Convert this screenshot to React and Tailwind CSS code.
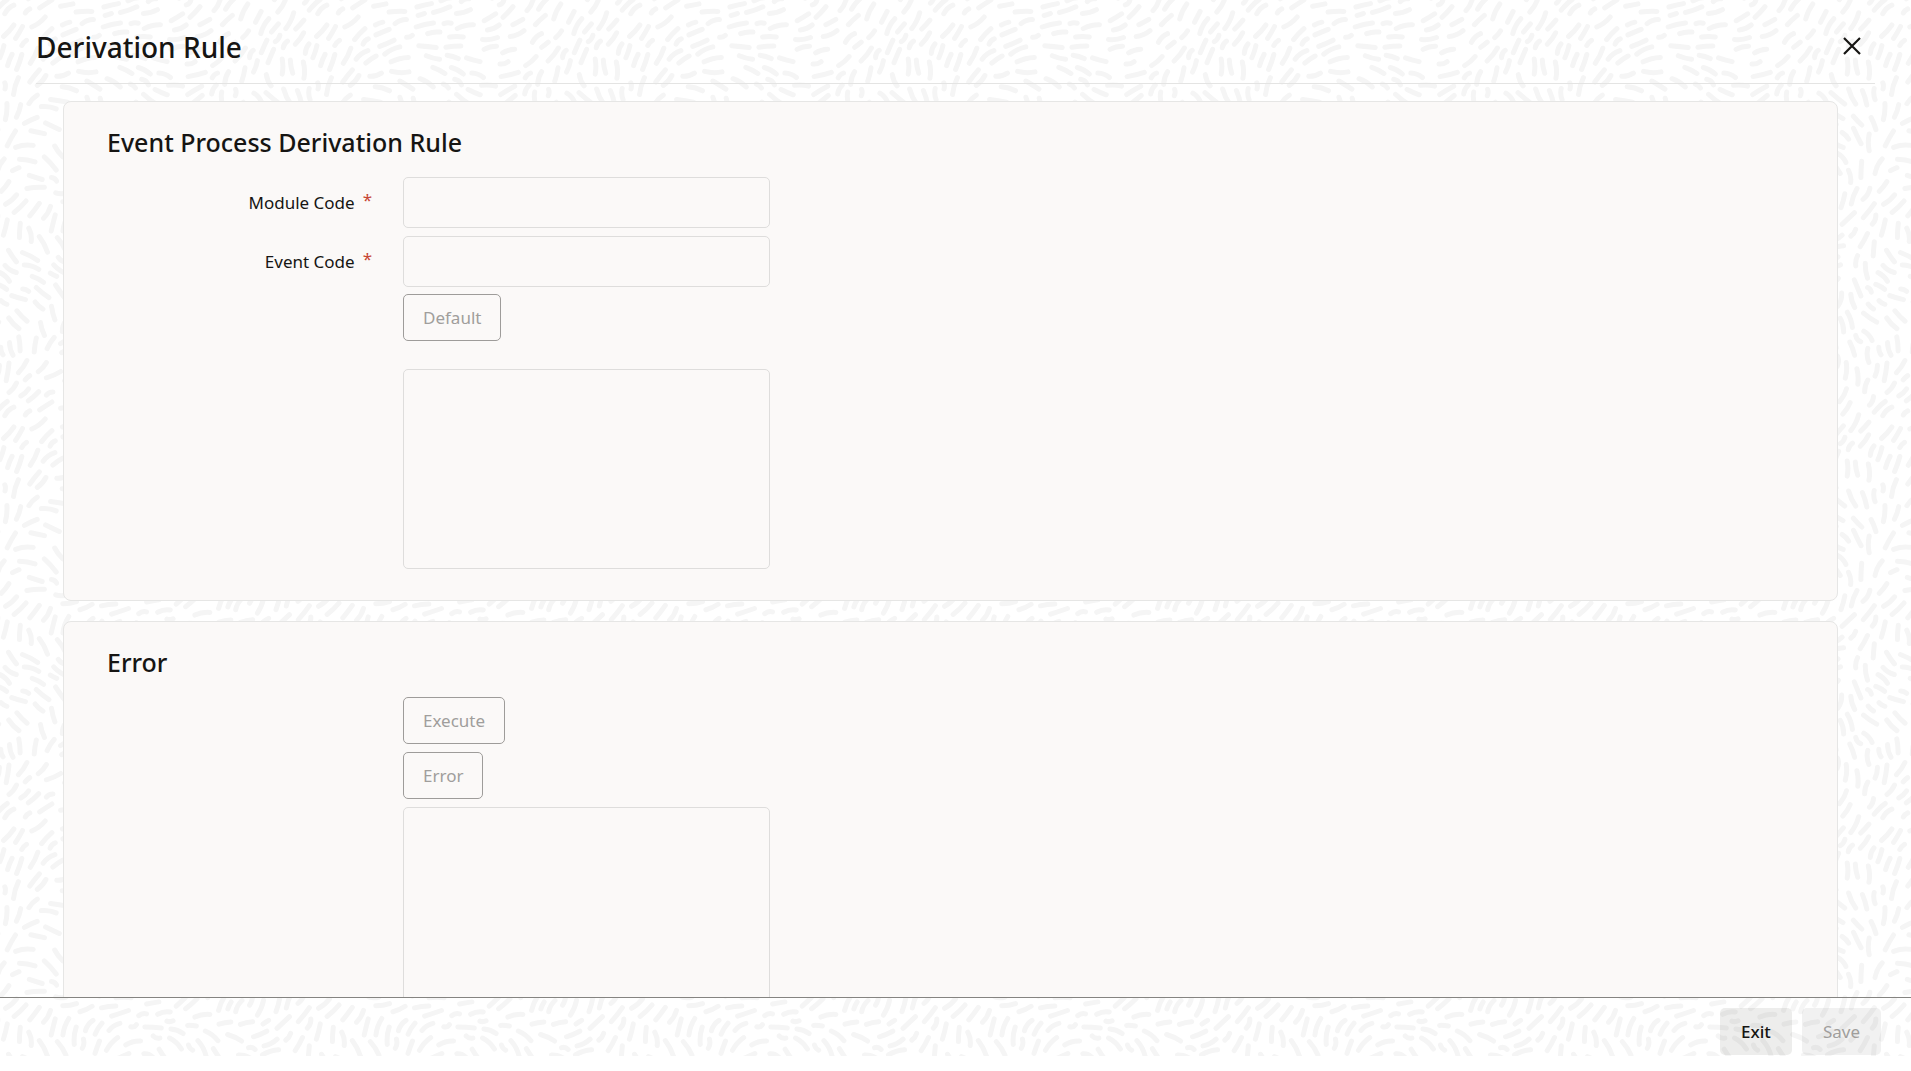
/**
 * Derivation Rule screen
 *
 * - Header with title and close button
 * - Scrollable body with one card per form section
 * - Footer with Exit / Save actions
 */

const TILE_W = 313;
const TILE_H = 402;

// Small seeded generator so the texture is the same on every load
const createRandom = (seed) => () => {
  seed = (seed * 1664525 + 1013904223) % 4294967296;
  return seed / 4294967296;
};

// Shortest distance on a repeating axis
const wrap = (d, size) => d - size * Math.round(d / size);

// Direction of the strokes, periodic in both axes so the tile repeats cleanly
const flowAngle = (x, y) => {
  const u = (x / TILE_W) * Math.PI * 2;
  const v = (y / TILE_H) * Math.PI * 2;
  return -0.6 + 1.3 * Math.sin(u + Math.sin(v) - 1.2) + 0.9 * Math.cos(2 * v + u);
};

const buildStrokes = () => {
  const random = createRandom(29);
  const placed = [];
  const strokes = [];
  for (let i = 0; i < 20000; i++) {
    const x = random() * TILE_W;
    const y = random() * TILE_H;
    const angle = flowAngle(x, y) + (random() - 0.5) * 0.35;
    const half = i < 2500 ? 6 + random() * 3 : 3 + random() * 4;
    const bend = (random() - 0.5) * 5;
    const dx = Math.cos(angle) * half;
    const dy = Math.sin(angle) * half;
    const dots = [-1, -0.5, 0, 0.5, 1].map((t) => [x + dx * t, y + dy * t]);
    const free = dots.every(([ax, ay]) =>
      placed.every(([bx, by]) => Math.hypot(wrap(ax - bx, TILE_W), wrap(ay - by, TILE_H)) > 8)
    );
    if (!free) continue;
    placed.push(...dots);
    const cx = x - Math.sin(angle) * bend;
    const cy = y + Math.cos(angle) * bend;
    // Strokes over an edge are drawn again on the opposite side
    for (const ox of [-TILE_W, 0, TILE_W]) {
      for (const oy of [-TILE_H, 0, TILE_H]) {
        const px = x + ox;
        const py = y + oy;
        if (px < -20 || px > TILE_W + 20 || py < -20 || py > TILE_H + 20) continue;
        strokes.push(
          `M${(px - dx).toFixed(1)} ${(py - dy).toFixed(1)}Q${(cx + ox).toFixed(1)} ${(cy + oy).toFixed(1)} ${(px + dx).toFixed(1)} ${(py + dy).toFixed(1)}`
        );
      }
    }
  }
  return strokes.join('');
};

const STROKES = buildStrokes();

function Texture() {
  return (
    <svg className="absolute inset-0 -z-10 h-full w-full" aria-hidden="true">
      <defs>
        <pattern id="texture" width={TILE_W} height={TILE_H} patternUnits="userSpaceOnUse">
          <path d={STROKES} fill="none" stroke="#f5f5f5" strokeWidth="5" strokeLinecap="round" />
        </pattern>
      </defs>
      <rect width="100%" height="100%" fill="url(#texture)" />
    </svg>
  );
}

function Card({ title, children }) {
  return (
    <section className="rounded-lg border border-[#e6e6e5] bg-[#fbf9f8] px-[43px] pt-[18px] pb-[31px]">
      <h2 className="mb-[13px] text-[25px] leading-[44px] font-medium">{title}</h2>
      {children}
    </section>
  );
}

function Field({ id, label }) {
  return (
    <div className="flex items-center">
      <label htmlFor={id} className="flex w-[296px] items-start justify-end pr-[31px] text-[17px] leading-6">
        {label}
        <span className="ml-2 leading-none text-[#c74634]" aria-hidden="true">
          *
        </span>
      </label>
      <input
        id={id}
        type="text"
        required
        className="h-[51px] w-full max-w-[367px] rounded-[5px] border border-[#dedddc] bg-transparent px-3 text-[17px]"
      />
    </div>
  );
}

function OutlineButton({ children }) {
  return (
    <button
      type="button"
      disabled
      className="h-[47px] rounded-[5px] border border-[#9e9c9a] px-[19px] text-[17px] text-[#a09e9c]"
    >
      {children}
    </button>
  );
}

function TextBox({ label }) {
  return (
    <textarea
      aria-label={label}
      className="block h-[200px] w-full max-w-[367px] resize-none rounded-[5px] border border-[#dedddc] bg-transparent p-3 text-[17px]"
    />
  );
}

export default function App() {
  return (
    <div className="h-screen bg-white pb-[15px] font-['Noto_Sans',sans-serif] text-[#161513]">
      <div className="relative isolate flex h-full flex-col">
        <Texture />

        {/* Header */}
        <header className="mx-9 flex h-[84px] shrink-0 items-center justify-between border-b border-[#e4e4e3] pt-[10px] pr-[11px]">
          <h1 className="text-[28px] font-medium">Derivation Rule</h1>
          <button type="button" aria-label="Close" className="mb-[2px] flex size-6 items-center justify-center">
            <svg viewBox="0 0 18 18" className="size-[18px]" fill="none" stroke="currentColor" strokeWidth="2.2">
              <path d="M1 1l16 16M17 1L1 17" />
            </svg>
          </button>
        </header>

        {/* Form sections */}
        <main className="flex min-h-0 flex-1 flex-col gap-5 overflow-y-auto pt-[17px] pr-[73px] pl-[63px] [scrollbar-width:none]">
          <Card title="Event Process Derivation Rule">
            <div className="flex flex-col gap-2">
              <Field id="module-code" label="Module Code" />
              <Field id="event-code" label="Event Code" />
            </div>
            <div className="mt-[7px] flex flex-col items-start gap-7 pl-[296px]">
              <OutlineButton>Default</OutlineButton>
              <TextBox label="Rule" />
            </div>
          </Card>

          <Card title="Error">
            <div className="flex flex-col items-start gap-2 pl-[296px]">
              <OutlineButton>Execute</OutlineButton>
              <OutlineButton>Error</OutlineButton>
              <TextBox label="Error details" />
            </div>
          </Card>
        </main>

        {/* Footer actions */}
        <footer className="flex shrink-0 justify-end gap-[10px] border-t border-[#858481] pt-[10px] pr-[30px] pb-px text-[17px]">
          <button type="button" className="h-[47px] rounded-[5px] bg-[#161513]/8 px-[21px] font-medium">
            Exit
          </button>
          <button type="button" disabled className="h-[47px] rounded-[5px] bg-[#161513]/6 px-[21px] text-[#a09e9c]">
            Save
          </button>
        </footer>
      </div>
    </div>
  );
}
